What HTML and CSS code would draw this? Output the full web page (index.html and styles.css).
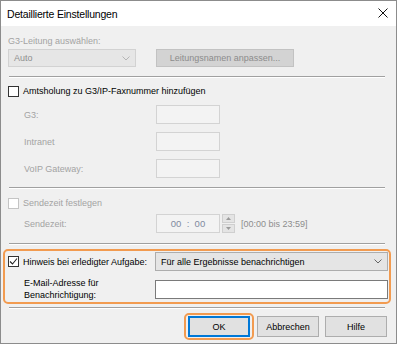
FILE: index.html
```html
<!doctype html>
<html>
  <head>
    <meta charset="utf-8">
    <title>Detaillierte Einstellungen</title>
    <link rel="stylesheet" href="styles.css">
  </head>
  <body>
    <div class="dialog">
      <div class="titlebar">
        <span class="title">Detaillierte Einstellungen</span>
        <svg class="close" width="10" height="10" viewBox="0 0 10 10"><path d="M0.5 0.5L9.5 9.5M9.5 0.5L0.5 9.5" stroke="#111" stroke-width="1"/></svg>
      </div>

      <div class="content">
        <div class="label disabled">G3-Leitung auswählen:</div>
        <div class="line-row">
          <div class="select select-disabled">
            <span>Auto</span>
            <svg class="chevron" width="8" height="5" viewBox="0 0 8 5"><path d="M0.5 0.5L4 4L7.5 0.5" fill="none" stroke="#b5b5b5"/></svg>
          </div>
          <div class="btn btn-disabled">Leitungsnamen anpassen...</div>
        </div>

        <div class="sep"></div>

        <div class="check"><span class="box"></span>Amtsholung zu G3/IP-Faxnummer hinzufügen</div>
        <div class="field field-first">
          <span class="field-label disabled">G3:</span>
          <span class="input input-disabled"></span>
        </div>
        <div class="field">
          <span class="field-label disabled">Intranet</span>
          <span class="input input-disabled"></span>
        </div>
        <div class="field">
          <span class="field-label disabled">VoIP Gateway:</span>
          <span class="input input-disabled"></span>
        </div>

        <div class="sep"></div>

        <div class="check check-time disabled"><span class="box box-disabled"></span>Sendezeit festlegen</div>
        <div class="field field-time">
          <span class="field-label disabled">Sendezeit:</span>
          <span class="input input-disabled time">00&nbsp;&nbsp;:&nbsp;&nbsp;00</span>
          <span class="spinner">
            <span class="spin"><svg width="5" height="3" viewBox="0 0 5 3"><path d="M0 3L2.5 0L5 3Z" fill="#9a9a9a"/></svg></span>
            <span class="spin"><svg width="5" height="3" viewBox="0 0 5 3"><path d="M0 0L2.5 3L5 0Z" fill="#9a9a9a"/></svg></span>
          </span>
          <span class="range disabled">[00:00 bis 23:59]</span>
        </div>

        <div class="sep sep-before-hl"></div>

        <div class="highlight">
          <div class="hl-row">
            <div class="check check-inline"><span class="box box-checked"><svg width="9" height="9" viewBox="0 0 9 9"><path d="M1 4.5L3.5 7L8 1.5" fill="none" stroke="#222" stroke-width="1.1"/></svg></span>Hinweis bei erledigter Aufgabe:</div>
            <div class="select select-active">
              <span>Für alle Ergebnisse benachrichtigen</span>
              <svg class="chevron" width="8" height="5" viewBox="0 0 8 5"><path d="M0.5 0.5L4 4L7.5 0.5" fill="none" stroke="#666"/></svg>
            </div>
          </div>
          <div class="hl-row hl-mail">
            <div class="mail-label">E-Mail-Adresse für<br>Benachrichtigung:</div>
            <div class="input input-mail"></div>
          </div>
        </div>

        <div class="sep sep-after-hl"></div>

        <div class="buttons">
          <div class="ok-wrap"><div class="btn btn-ok">OK</div></div>
          <div class="btn">Abbrechen</div>
          <div class="btn">Hilfe</div>
        </div>
      </div>
    </div>
  </body>
</html>
```

FILE: styles.css
```css
* {
  box-sizing: border-box;
}

html,
body {
  margin: 0;
  padding: 0;
  background: #fff;
}
body {
  font-family: "Liberation Sans", Arial, sans-serif;
  font-size: 9px;
  color: #111;
}

.dialog {
  width: 397px;
  height: 344px;
  border: 1px solid #8c8c8c;
  background: #f0f0f0;
  display: flex;
  flex-direction: column;
}

.titlebar {
  height: 25px;
  background: #fff;
  display: flex;
  align-items: center;
  justify-content: space-between;
  padding: 0 8px 0 6px;
}
.title {
  font-size: 10.5px;
  letter-spacing: -0.2px;
  color: #000;
}
.close {
  display: block;
  margin-top: -1px;
}

.content {
  padding: 0 8px 0 7px;
  display: flex;
  flex-direction: column;
}

.disabled {
  color: #a3a3a3;
}

.label {
  margin-top: 9px;
  line-height: 12px;
}

.line-row {
  margin-top: 2px;
  display: flex;
  height: 18px;
  gap: 20px;
}

.select {
  display: flex;
  align-items: center;
  justify-content: space-between;
  padding: 0 5px 0 5px;
}
.select-disabled {
  width: 128px;
  background: #e6e6e6;
  border: 1px solid #d2d2d2;
  color: #8f8f8f;
}
.select-active {
  flex: 1;
  height: 19px;
  background: #e5e5e5;
  border: 1px solid #adadad;
  color: #000;
}
.chevron {
  display: block;
}

.btn {
  width: 62px;
  height: 21px;
  display: flex;
  align-items: center;
  justify-content: center;
  background: #e1e1e1;
  border: 1px solid #adadad;
  color: #000;
}
.btn-disabled {
  width: 138px;
  height: 18px;
  background: #d3d3d3;
  border-color: #c2c2c2;
  color: #8c8c8c;
}

.sep {
  margin-top: 9px;
  height: 2px;
  border-top: 1px solid #a0a0a0;
  border-bottom: 1px solid #fff;
  margin-left: 1px;
  margin-right: 3px;
}

.check {
  display: flex;
  align-items: center;
  height: 14px;
  margin-top: 6px;
  color: #000;
}
.check.disabled {
  color: #a3a3a3;
}
.box {
  width: 11px;
  height: 11px;
  border: 1px solid #333;
  background: #fff;
  margin-right: 4px;
  display: flex;
  align-items: center;
  justify-content: center;
}
.box-disabled {
  border-color: #c4c4c4;
}

.field {
  display: flex;
  align-items: center;
  margin-top: 8px;
}
.field-first {
  margin-top: 7px;
}
.field-label {
  width: 148px;
  padding-left: 16px;
}
.input {
  width: 64px;
  height: 19px;
}
.input-disabled {
  background: #f3f3f3;
  border: 1px solid #d3d3d3;
}

.check-time {
  margin-top: 7px;
}
.field-time {
  margin-top: 4px;
}
.time {
  display: flex;
  align-items: center;
  justify-content: center;
  color: #7f8aa0;
  font-size: 9.5px;
}
.spinner {
  display: flex;
  flex-direction: column;
  gap: 1px;
  margin-left: 2px;
  height: 19px;
}
.spin {
  width: 13px;
  height: 9px;
  background: #e4e4e4;
  border: 1px solid #cfcfcf;
  display: flex;
  align-items: center;
  justify-content: center;
}
.range {
  margin-left: 6px;
  color: #8d8d8d;
}

.sep-before-hl {
  margin-top: 10px;
}

.highlight {
  margin: 4px -3px 0 -5px;
  border: 2px solid #f29b50;
  border-radius: 5px;
  padding: 1px 1px 1px 3px;
}
.hl-row {
  display: flex;
  align-items: center;
}
.check-inline {
  width: 147px;
  margin-top: 0;
}
.hl-mail {
  margin-top: 6px;
  height: 24px;
}
.mail-label {
  width: 147px;
  padding-left: 16px;
  line-height: 12px;
  color: #000;
}
.input-mail {
  flex: 1;
  background: #fff;
  border: 1px solid #7a7a7a;
}

.sep-after-hl {
  margin-top: 3px;
}

.buttons {
  margin-top: 4px;
  display: flex;
  justify-content: flex-end;
  align-items: center;
  gap: 6px;
  padding-right: 1px;
}
.ok-wrap {
  border: 2px solid #f29b50;
  border-radius: 5px;
  padding: 1px 2px;
  margin-right: -3px;
}
.btn-ok {
  border: 2px solid #0078d7;
}
```
